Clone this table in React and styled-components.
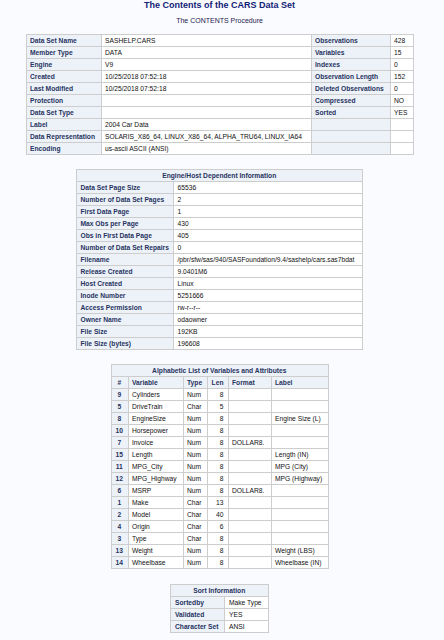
import styled, { createGlobalStyle } from "styled-components";

const GlobalStyle = createGlobalStyle`
  html, body {
    margin: 0;
    padding: 0;
    background: #fafbfe;
  }
  body {
    font-family: "Liberation Sans", Arial, sans-serif;
  }
`;

const attributes = [
    ["Data Set Name", "SASHELP.CARS", "Observations", "428"],
    ["Member Type", "DATA", "Variables", "15"],
    ["Engine", "V9", "Indexes", "0"],
    ["Created", "10/25/2018 07:52:18", "Observation Length", "152"],
    ["Last Modified", "10/25/2018 07:52:18", "Deleted Observations", "0"],
    ["Protection", "", "Compressed", "NO"],
    ["Data Set Type", "", "Sorted", "YES"],
    ["Label", "2004 Car Data", "", ""],
    ["Data Representation", "SOLARIS_X86_64, LINUX_X86_64, ALPHA_TRU64, LINUX_IA64", "", ""],
    ["Encoding", "us-ascii ASCII (ANSI)", "", ""],
];

const engineHost = [
    ["Data Set Page Size", "65536"],
    ["Number of Data Set Pages", "2"],
    ["First Data Page", "1"],
    ["Max Obs per Page", "430"],
    ["Obs in First Data Page", "405"],
    ["Number of Data Set Repairs", "0"],
    ["Filename", "/pbr/sfw/sas/940/SASFoundation/9.4/sashelp/cars.sas7bdat"],
    ["Release Created", "9.0401M6"],
    ["Host Created", "Linux"],
    ["Inode Number", "5251666"],
    ["Access Permission", "rw-r--r--"],
    ["Owner Name", "odaowner"],
    ["File Size", "192KB"],
    ["File Size (bytes)", "196608"],
];

const variables = [
    [9, "Cylinders", "Num", 8, "", ""],
    [5, "DriveTrain", "Char", 5, "", ""],
    [8, "EngineSize", "Num", 8, "", "Engine Size (L)"],
    [10, "Horsepower", "Num", 8, "", ""],
    [7, "Invoice", "Num", 8, "DOLLAR8.", ""],
    [15, "Length", "Num", 8, "", "Length (IN)"],
    [11, "MPG_City", "Num", 8, "", "MPG (City)"],
    [12, "MPG_Highway", "Num", 8, "", "MPG (Highway)"],
    [6, "MSRP", "Num", 8, "DOLLAR8.", ""],
    [1, "Make", "Char", 13, "", ""],
    [2, "Model", "Char", 40, "", ""],
    [4, "Origin", "Char", 6, "", ""],
    [3, "Type", "Char", 8, "", ""],
    [13, "Weight", "Num", 8, "", "Weight (LBS)"],
    [14, "Wheelbase", "Num", 8, "", "Wheelbase (IN)"],
];

const sortInfo = [
    ["Sortedby", "Make Type"],
    ["Validated", "YES"],
    ["Character Set", "ANSI"],
];

const App = () => {
    return (
        <Page>
            <GlobalStyle />
            <Title>The Contents of the CARS Data Set</Title>
            <Subtitle>The CONTENTS Procedure</Subtitle>

            <Table $w={387} $top={9.5}>
                <colgroup>
                    <Col $w={75} /><Col $w={210} /><Col $w={79} /><Col $w={23} />
                </colgroup>
                <tbody>
                    {attributes.map((row, i) => (
                        <tr key={i}>
                            <Label>{row[0]}</Label>
                            <Cell>{row[1]}</Cell>
                            <Label>{row[2]}</Label>
                            <Cell>{row[3]}</Cell>
                        </tr>
                    ))}
                </tbody>
            </Table>

            <Table $w={286} $top={13.5}>
                <colgroup>
                    <Col $w={97} /><Col $w={189} />
                </colgroup>
                <thead>
                    <tr><Caption colSpan={2}>Engine/Host Dependent Information</Caption></tr>
                </thead>
                <tbody>
                    {engineHost.map((row, i) => (
                        <tr key={i}>
                            <Label>{row[0]}</Label>
                            <Cell>{row[1]}</Cell>
                        </tr>
                    ))}
                </tbody>
            </Table>

            <Table $w={217} $top={14}>
                <colgroup>
                    <Col $w={17} /><Col $w={55} /><Col $w={24} /><Col $w={21} /><Col $w={43} /><Col $w={57} />
                </colgroup>
                <thead>
                    <tr><Caption colSpan={6}>Alphabetic List of Variables and Attributes</Caption></tr>
                    <tr>
                        <Label $align="center">#</Label>
                        <Label>Variable</Label>
                        <Label>Type</Label>
                        <Label $align="right">Len</Label>
                        <Label>Format</Label>
                        <Label>Label</Label>
                    </tr>
                </thead>
                <tbody>
                    {variables.map((v) => (
                        <tr key={v[0]}>
                            <Label $align="center">{v[0]}</Label>
                            <Cell>{v[1]}</Cell>
                            <Cell>{v[2]}</Cell>
                            <Cell $align="right">{v[3]}</Cell>
                            <Cell>{v[4]}</Cell>
                            <Cell>{v[5]}</Cell>
                        </tr>
                    ))}
                </tbody>
            </Table>

            <Table $w={97} $top={15}>
                <colgroup>
                    <Col $w={54} /><Col $w={43} />
                </colgroup>
                <thead>
                    <tr><Caption colSpan={2}>Sort Information</Caption></tr>
                </thead>
                <tbody>
                    {sortInfo.map((row, i) => (
                        <tr key={i}>
                            <Label>{row[0]}</Label>
                            <Cell>{row[1]}</Cell>
                        </tr>
                    ))}
                </tbody>
            </Table>
        </Page>
    );
};

const Page = styled.div`
  width: 439px;
  min-height: 640px;
  background: #fafbfe;
  overflow: hidden;
`;

const Title = styled.h1`
  margin: 0;
  font-size: 9px;
  line-height: 11px;
  font-weight: bold;
  color: #112277;
  text-align: center;
`;

const Subtitle = styled.h2`
  margin: 4.5px 0 0;
  font-size: 7px;
  line-height: 9px;
  font-weight: normal;
  color: #1a2050;
  text-align: center;
`;

const Table = styled.table`
  width: ${(p) => p.$w}px;
  margin: ${(p) => p.$top}px auto 0;
  table-layout: fixed;
  border-collapse: collapse;
  background: #ffffff;
  border: 1px solid #c1c1c1;
  font-size: 6.7px;
`;

const Col = styled.col`
  width: ${(p) => p.$w}px;
`;

const cellBase = `
  height: 11px;
  padding: 0 4px 0 3.5px;
  line-height: 11px;
  border: 1px solid #cdcdcd;
  white-space: nowrap;
  overflow: hidden;
  vertical-align: middle;
`;

const Label = styled.th`
  ${cellBase}
  background: #edf2f9;
  color: #27335f;
  font-weight: bold;
  text-align: ${(p) => p.$align || "left"};
`;

const Cell = styled.td`
  ${cellBase}
  background: #ffffff;
  color: #111111;
  text-align: ${(p) => p.$align || "left"};
`;

const Caption = styled.th`
  ${cellBase}
  background: #edf2f9;
  color: #27335f;
  font-weight: bold;
  text-align: center;
`;

export default App;
